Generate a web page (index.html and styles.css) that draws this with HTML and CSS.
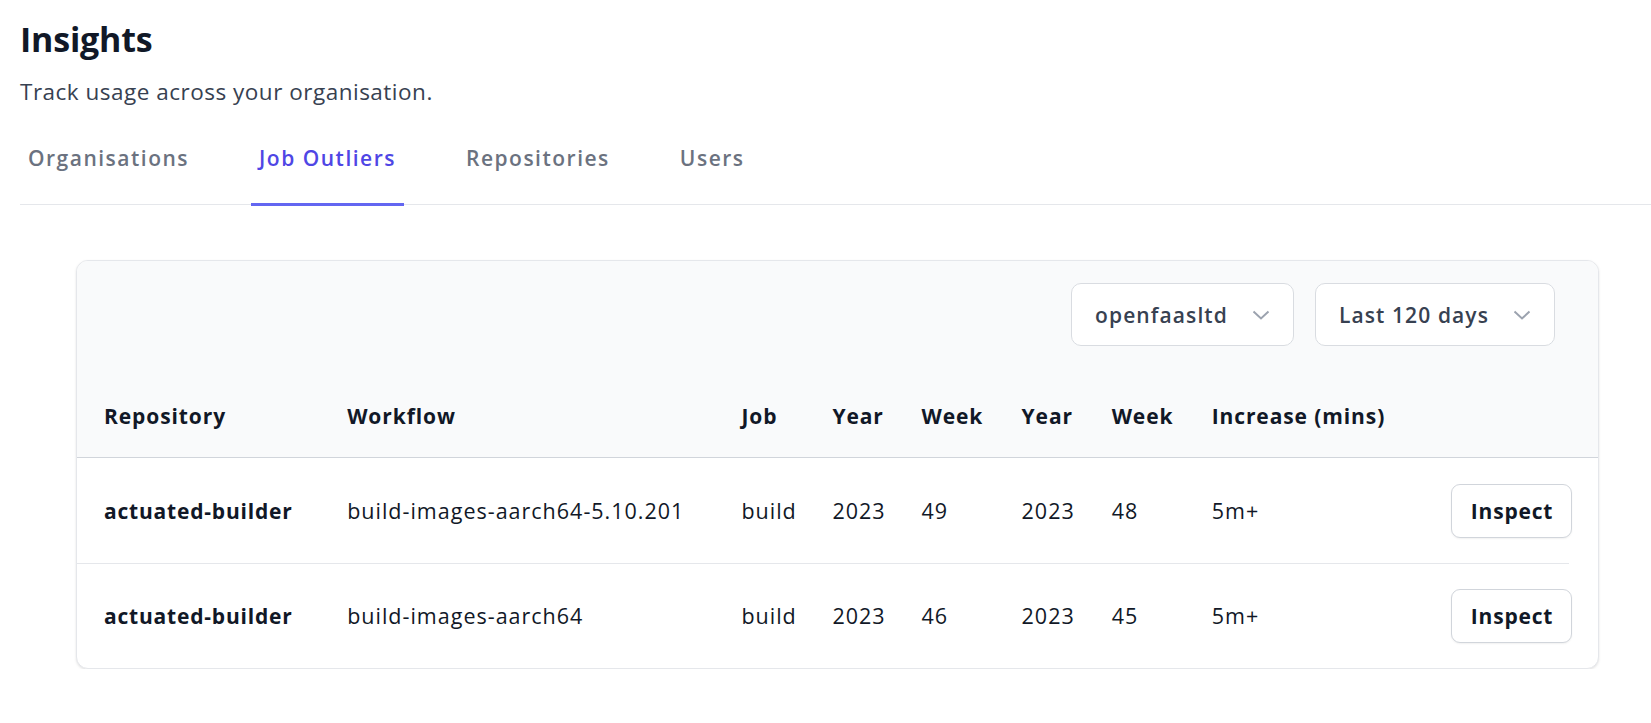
FILE: index.html
```html
<!DOCTYPE html>
<html lang="en">
<head>
<meta charset="utf-8">
<title>Insights</title>
<link rel="stylesheet" href="styles.css">
</head>
<body>
<main class="page">
  <header class="page-head">
    <h1 class="title">Insights</h1>
    <p class="subtitle">Track usage across your organisation.</p>
  </header>
  <nav class="tabs">
    <a class="tab">Organisations</a>
    <a class="tab tab-active">Job Outliers</a>
    <a class="tab">Repositories</a>
    <a class="tab">Users</a>
  </nav>
  <section class="card">
    <div class="toolbar">
      <button class="select"><span>openfaasltd</span><svg class="chev" width="18" height="10" viewBox="0 0 18 10"><polyline points="1.5,1.5 9,8.5 16.5,1.5"/></svg></button>
      <button class="select"><span>Last 120 days</span><svg class="chev" width="18" height="10" viewBox="0 0 18 10"><polyline points="1.5,1.5 9,8.5 16.5,1.5"/></svg></button>
    </div>
    <table class="outliers">
      <colgroup>
        <col class="col-repo"><col class="col-flow"><col class="col-job"><col class="col-y1"><col class="col-w1"><col class="col-y2"><col class="col-w2"><col class="col-inc"><col class="col-act">
      </colgroup>
      <thead>
        <tr><th class="cell-first">Repository</th><th>Workflow</th><th>Job</th><th>Year</th><th>Week</th><th>Year</th><th>Week</th><th>Increase (mins)</th><th class="cell-action"></th></tr>
      </thead>
      <tbody>
        <tr><td class="cell-first">actuated-builder</td><td>build-images-aarch64-5.10.201</td><td>build</td><td>2023</td><td>49</td><td>2023</td><td>48</td><td>5m+</td><td class="cell-action"><button class="btn">Inspect</button></td></tr>
        <tr><td class="cell-first">actuated-builder</td><td>build-images-aarch64</td><td>build</td><td>2023</td><td>46</td><td>2023</td><td>45</td><td>5m+</td><td class="cell-action"><button class="btn">Inspect</button></td></tr>
      </tbody>
    </table>
  </section>
</main>
</body>
</html>
```
FILE: styles.css
```css
* { box-sizing: border-box; }
html, body { margin: 0; background: #fff; }
body { font-family: "Open Sans", sans-serif; color: #111827; }
.page { padding: 19px 0 0 20px; }
.title { margin: 0; font-size: 34px; line-height: 40px; font-weight: 700; letter-spacing: -0.2px; color: #111827; }
.subtitle { margin: 17px 0 0; font-size: 22.5px; line-height: 32px; letter-spacing: 0.5px; color: #374151; }
.tabs { display: flex; gap: 54px; margin-top: 36px; border-bottom: 1px solid #e5e7eb; }
.tab { padding: 0 8px 31px; line-height: 28px; font-size: 21px; font-weight: 600; letter-spacing: 1.5px; color: #6b7280; border-bottom: 3px solid transparent; margin-bottom: -2px; cursor: pointer; }
.tab-active { color: #4f46e5; border-bottom-color: #6366f1; }
.card { margin: 55px 52px 0 56px; border: 1px solid #e5e7eb; border-radius: 12px; background: #fff; box-shadow: 0 1px 3px rgba(0,0,0,.08), 0 1px 2px rgba(0,0,0,.04); overflow: hidden; }
.toolbar { display: flex; justify-content: flex-end; gap: 21px; padding: 22px 43px 0; background: #f9fafb; }
.select { display: flex; align-items: center; gap: 24px; height: 63px; padding: 0 23px; border: 1px solid #d9dce1; border-radius: 10px; background: #fff; font: 600 21px/28px "Open Sans", sans-serif; letter-spacing: 1.1px; color: #374151; }
.chev { fill: none; stroke: #9ca3af; stroke-width: 2; }
.outliers { width: 100%; border-collapse: separate; border-spacing: 0; table-layout: fixed; }
.col-repo { width: 270px; } .col-flow { width: 394px; } .col-job { width: 91px; } .col-y1 { width: 89px; } .col-w1 { width: 100px; } .col-y2 { width: 90px; } .col-w2 { width: 100px; } .col-inc { width: 239px; } .col-act { width: 147px; }
.outliers th { background: #f9fafb; text-align: left; font-weight: 700; font-size: 21px; line-height: 28px; letter-spacing: 0.9px; padding: 56px 0 27px; border-bottom: 1px solid #d1d5db; white-space: nowrap; }
.outliers td { padding: 26px 0 25px; vertical-align: middle; font-size: 21.5px; line-height: 28px; letter-spacing: 1px; white-space: nowrap; }
.outliers tbody tr + tr td { background: linear-gradient(#e5e7eb, #e5e7eb) top left / 100% 1px no-repeat; }
.outliers tbody tr + tr td.cell-action { background-size: calc(100% - 29px) 1px; }
.outliers .cell-first { padding-left: 27px; }
.outliers td.cell-first { font-weight: 700; font-size: 21px; letter-spacing: 0.8px; }
.outliers .cell-action { text-align: right; padding-right: 30px; }
.btn { height: 54px; padding: 0 18px 0 19px; border: 1px solid #d1d5db; border-radius: 9px; background: #fff; font: 700 21px/28px "Open Sans", sans-serif; letter-spacing: 0.8px; color: #111827; box-shadow: 0 1px 2px rgba(0,0,0,.06); cursor: pointer; }
```
